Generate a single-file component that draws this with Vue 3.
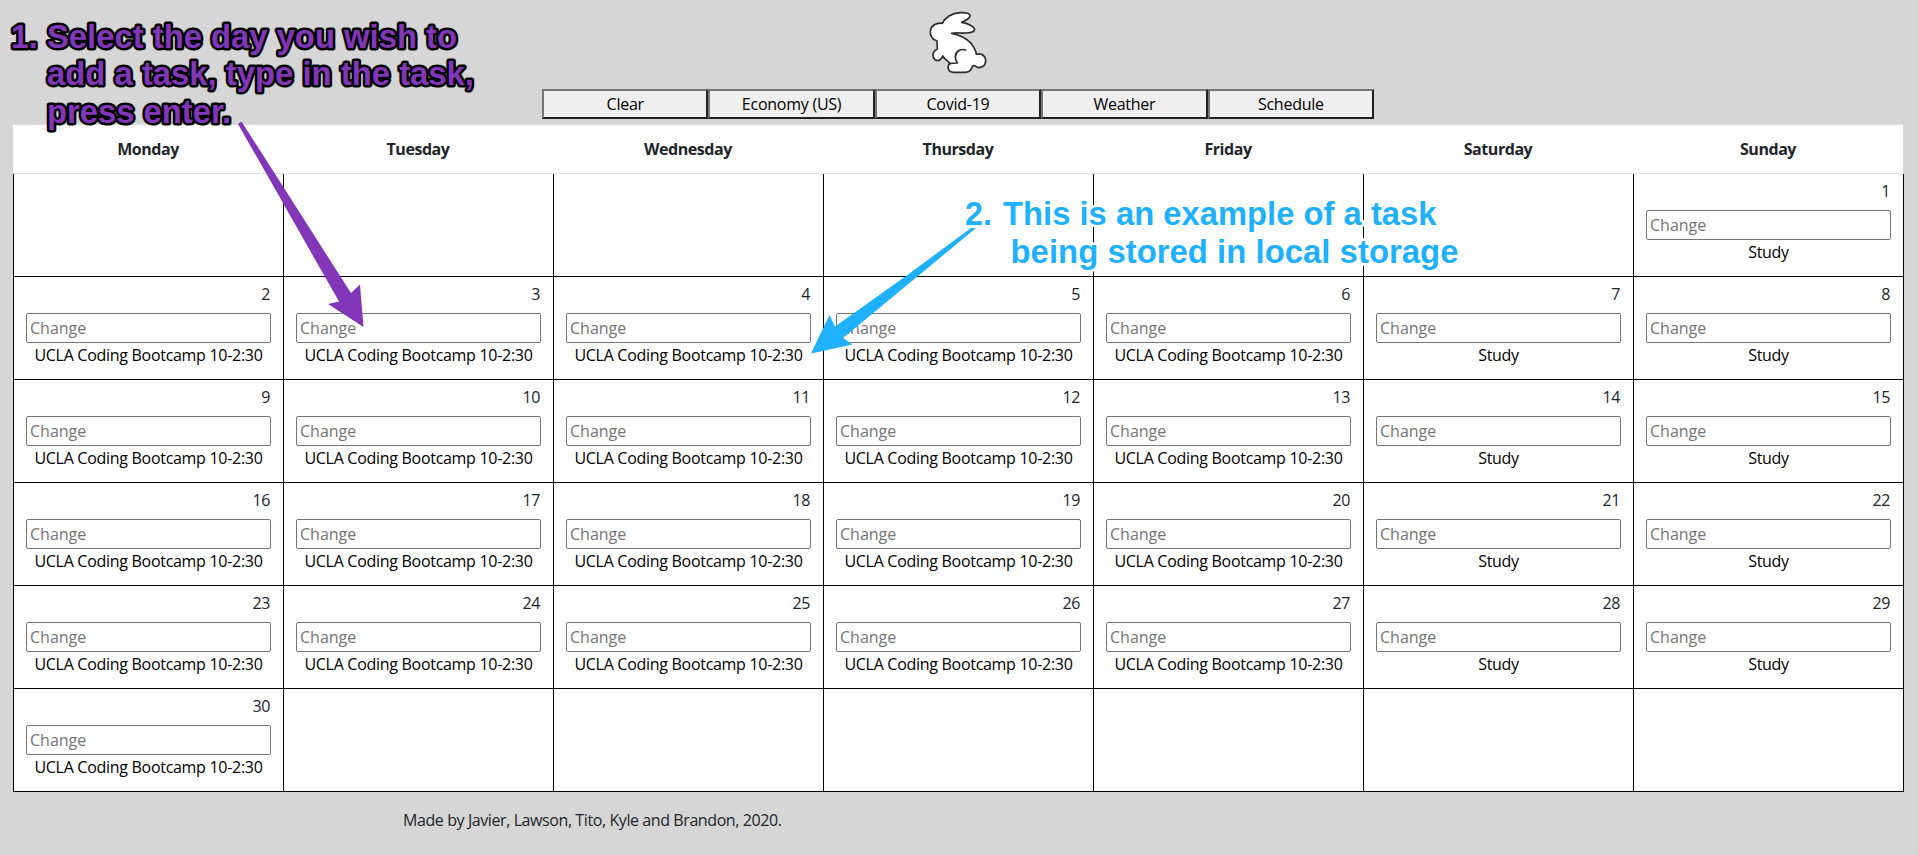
<script setup>
const days = ['Monday', 'Tuesday', 'Wednesday', 'Thursday', 'Friday', 'Saturday', 'Sunday']
const actions = ['Clear', 'Economy (US)', 'Covid-19', 'Weather', 'Schedule']

// The month starts on a Sunday, so six blank cells come first.
const cells = Array.from({ length: 42 }, (_, i) => {
  const date = i - 5
  if (date < 1 || date > 30) return { id: i }
  return { id: i, date, task: i % 7 >= 5 ? 'Study' : 'UCLA Coding Bootcamp 10-2:30' }
})
</script>

<template>
  <div class="page">
    <header class="top">
      <svg class="logo" width="66" height="74" viewBox="0 0 198 222">
        <g fill="#fff" stroke="#2b2b2b" stroke-width="5" stroke-linejoin="round" stroke-linecap="round">
          <path d="M52 55 C60 38 80 24 105 23 C125 22 136 26 135 33 C133 42 120 48 110 52 C130 55 147 65 149 73 C149 82 135 84 120 84 C105 85 92 82 80 85 C105 90 125 100 138 115 C147 127 153 138 154 148 C168 143 182 152 182 167 C182 182 170 190 157 187 C150 181 146 180 142 184 C140 194 136 201 122 202 L85 202 C70 202 66 188 72 177 L75 174 C66 167 58 162 53 153 C50 164 40 170 30 164 C22 157 20 140 37 132 L36 108 C22 103 15 93 16 78 C18 62 34 52 52 55 Z" />
          <path d="M122 135 C108 130 92 138 91 155 C91 162 93 168 97 174 C85 174 78 174 72 178" />
        </g>
      </svg>
      <nav class="actions">
        <button v-for="a in actions" :key="a" class="action">{{ a }}</button>
      </nav>
    </header>

    <main class="calendar">
      <div class="heads">
        <div v-for="d in days" :key="d" class="head">{{ d }}</div>
      </div>
      <div class="grid">
        <div v-for="c in cells" :key="c.id" class="cell">
          <template v-if="c.date">
            <div class="date">{{ c.date }}</div>
            <input class="field" type="text" placeholder="Change" />
            <div class="task">{{ c.task }}</div>
          </template>
        </div>
      </div>
    </main>

    <footer class="foot">Made by Javier, Lawson, Tito, Kyle and Brandon, 2020.</footer>

    <svg class="notes" width="1918" height="855" viewBox="0 0 1918 855">
      <polygon fill="#8236b8" points="238,124 241.500,121.500 351,293 360,284.500 363.500,327 328,304 339,301.500" />
      <g class="note purple">
        <text x="11" y="47.500" textLength="26.500" lengthAdjust="spacingAndGlyphs">1.</text>
        <text x="47" y="47.500" textLength="410" lengthAdjust="spacingAndGlyphs">Select the day you wish to</text>
        <text x="47" y="85" textLength="427" lengthAdjust="spacingAndGlyphs">add a task, type in the task,</text>
        <text x="47" y="122.500" textLength="184" lengthAdjust="spacingAndGlyphs">press enter.</text>
      </g>
      <polygon fill="#1fb0ff" points="971,228 976,228 918,276 843,338 852.500,344.500 811,353.500 829.500,315 835,326.500 906,276" />
      <g class="note blue">
        <text x="965" y="225" textLength="27" lengthAdjust="spacingAndGlyphs">2.</text>
        <text x="1003" y="225" textLength="433.500" lengthAdjust="spacingAndGlyphs">This is an example of a task</text>
        <text x="1010.500" y="262.500" textLength="448" lengthAdjust="spacingAndGlyphs">being stored in local storage</text>
      </g>
    </svg>
  </div>
</template>

<style>
html,
body {
  margin: 0;
  background: #d6d6d6;
}
</style>

<style scoped>
.page {
  position: relative;
  box-sizing: border-box;
  width: 1918px;
  height: 855px;
  overflow: hidden;
  background: #d6d6d6;
  color: #212529;
  font: 16px/24px "Segoe UI", "Open Sans", "Noto Sans", sans-serif;
}
.top {
  display: flex;
  flex-direction: column;
  align-items: center;
  height: 124px;
  padding: 5px 2px 0 0;
  box-sizing: border-box;
}
.logo {
  display: block;
  flex: none;
}
.actions {
  display: flex;
  width: 832px;
  margin-top: 10px;
}
.action {
  flex: 1;
  height: 30px;
  padding: 1px 0 0;
  border: 2px solid;
  border-color: #767676 #212121 #212121 #767676;
  background: #efefef;
  color: #000;
  font: inherit;
  line-height: 25px;
  letter-spacing: -0.25px;
}
.calendar {
  width: 1891px;
  margin-left: 13px;
}
.heads {
  display: grid;
  grid-template-columns: repeat(7, 270px);
  width: 1890px;
  box-sizing: border-box;
  height: 50px;
  border-top: 1px solid #dee2e6;
  border-bottom: 1px solid #dee2e6;
  background: #fff;
}
.head {
  padding: 12px 0;
  text-align: center;
  font-weight: 700;
  letter-spacing: -0.45px;
}
.grid {
  display: grid;
  grid-template-columns: repeat(7, 270px);
  grid-auto-rows: 103px;
  border-left: 1px solid #000;
  background: #fff;
}
.cell {
  box-sizing: border-box;
  padding: 5px 12px 0;
  border-right: 1px solid #000;
  border-bottom: 1px solid #000;
}
.date {
  text-align: right;
  padding-right: 1px;
  letter-spacing: -0.4px;
}
.field {
  display: block;
  box-sizing: border-box;
  width: 245px;
  height: 30px;
  margin: 7px 0 0;
  padding: 1px 3px;
  border: 1px solid #767676;
  border-radius: 2px;
  background: #fff;
  font: inherit;
}
.field::placeholder {
  color: #757575;
}
.task {
  color: #000;
  text-align: center;
  letter-spacing: -0.29px;
  white-space: nowrap;
}
.foot {
  margin: 16px 0 0 403px;
  letter-spacing: -0.41px;
}
.notes {
  position: absolute;
  left: 0;
  top: 0;
  pointer-events: none;
}
.note {
  font: 700 33px "Liberation Sans", Arial, sans-serif;
  paint-order: stroke;
  stroke-linejoin: round;
}
.purple {
  fill: #8236b8;
  stroke: #000;
  stroke-width: 5px;
}
.blue {
  fill: #1fb0ff;
  stroke: #fff;
  stroke-width: 5px;
}
</style>
